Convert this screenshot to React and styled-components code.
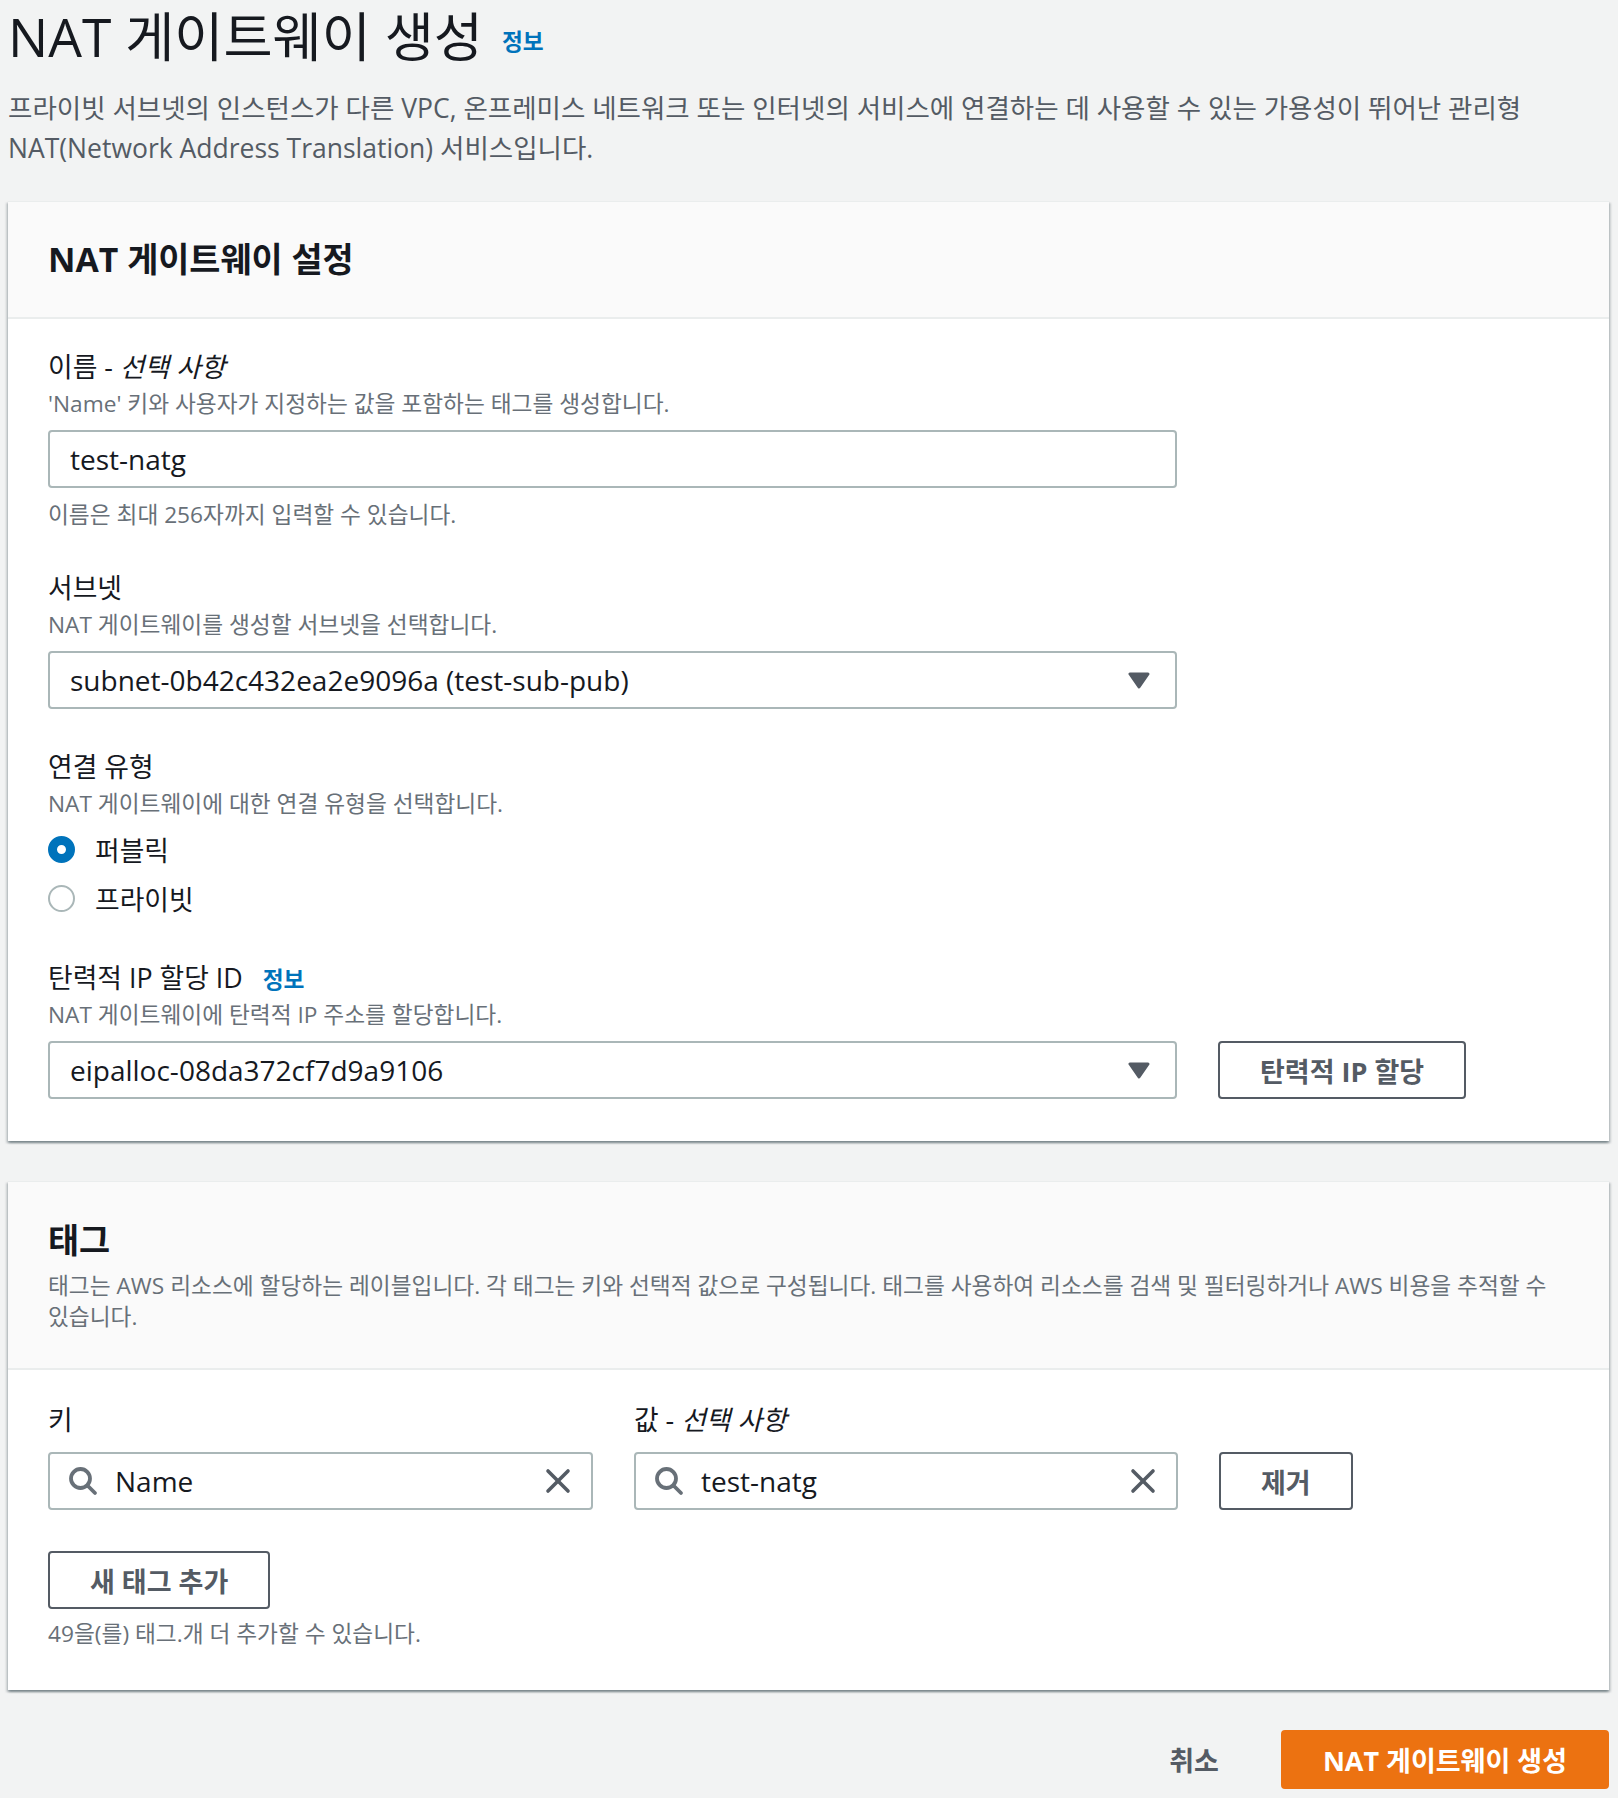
import React from 'react';
import styled, { createGlobalStyle } from 'styled-components';

const GlobalStyle = createGlobalStyle`
  html, body { margin: 0; padding: 0; background: #f2f3f3; }
  body {
    font-family: "Open Sans", "Noto Sans CJK KR", sans-serif;
    color: #16191f;
  }
  * { box-sizing: border-box; }
`;

const Page = styled.div`
  display: flex;
  flex-direction: column;
  padding: 0 9px 9px 8px;
`;

const TitleRow = styled.div`
  display: flex;
  align-items: center;
  gap: 19px;
`;

const H1 = styled.h1`
  margin: 0;
  font-size: 53.4px;
  line-height: 73px;
  font-weight: 400;
  color: #16191f;
`;

const InfoLink = styled.a`
  color: #0073bb;
  font-weight: 700;
  font-size: 22.7px;
  margin-top: ${p => p.$mt || '0'};
  text-decoration: none;
  cursor: pointer;
`;

const PageDesc = styled.p`
  margin: 15px 0 0;
  font-size: 26.5px;
  line-height: 40px;
  color: #545b64;
`;

const Card = styled.section`
  margin-top: ${p => p.$mt || '33px'};
  background: #fff;
  border-top: 1px solid #eaeded;
  box-shadow: 0 2px 2px 0 rgba(0, 28, 36, 0.3), 2px 2px 2px 0 rgba(0, 28, 36, 0.15),
    -2px 2px 2px 0 rgba(0, 28, 36, 0.15);
`;

const CardHeader = styled.header`
  background: #fafafa;
  border-bottom: 2px solid #eaeded;
  padding: ${p => p.$pad || '37px 40px 37px'};
`;

const CardTitle = styled.h2`
  margin: 0;
  font-size: 33.8px;
  line-height: 41px;
  font-weight: 700;
  color: #16191f;
`;

const CardDesc = styled.p`
  margin: 9px 0 0;
  font-size: 22.7px;
  line-height: 31px;
  color: #687078;
`;

const CardBody = styled.div`
  display: flex;
  flex-direction: column;
  gap: ${p => p.$gap || '38px'};
  padding: ${p => p.$pad || '28px 40px 42px'};
`;

const Field = styled.div`
  display: flex;
  flex-direction: column;
`;

const Label = styled.label`
  display: flex;
  align-items: baseline;
  gap: 20px;
  height: 40px;
  font-size: 26.8px;
  line-height: 40px;
  color: #16191f;
`;

const Optional = styled.i`
  font-style: italic;
`;

const Hint = styled.div`
  margin-top: ${p => p.$mt || '2px'};
  font-size: 22.7px;
  line-height: 30px;
  color: #687078;
`;

const ControlRow = styled.div`
  display: flex;
  align-items: center;
  gap: 41px;
  margin-top: 11px;
`;

const InputBox = styled.div`
  display: flex;
  align-items: center;
  gap: 17px;
  width: ${p => p.$w || '1129px'};
  height: 58px;
  padding: 0 ${p => p.$pr || '20px'} 0 ${p => p.$pl || '20px'};
  background: #fff;
  border: 2px solid #aab7b8;
  border-radius: 4px;
`;

const TextInput = styled.input`
  flex: 1;
  min-width: 0;
  border: none;
  outline: none;
  padding: 0;
  background: transparent;
  font-family: "Open Sans", "Noto Sans CJK KR", sans-serif;
  font-size: 28px;
  color: #16191f;
`;

const SelectText = styled.span`
  flex: 1;
  font-size: 28px;
  color: #16191f;
`;

const Button = styled.button`
  height: ${p => (p.$primary ? '59px' : '58px')};
  padding: 0 40px;
  border: 2px solid ${p => (p.$primary ? '#ec7211' : p.$link ? 'transparent' : '#545b64')};
  border-radius: 4px;
  background: ${p => (p.$primary ? '#ec7211' : 'transparent')};
  color: ${p => (p.$primary ? '#fff' : '#545b64')};
  font-family: "Open Sans", "Noto Sans CJK KR", sans-serif;
  font-size: 27px;
  font-weight: 700;
  cursor: pointer;
  white-space: nowrap;
`;

const RadioGroup = styled.div`
  display: flex;
  flex-direction: column;
  gap: 9px;
  margin: 10px 0 2px;
`;

const RadioRow = styled.label`
  display: flex;
  align-items: center;
  gap: 20px;
  height: 40px;
  font-size: 26.8px;
  color: #16191f;
`;

const RadioDot = styled.span`
  width: 27px;
  height: 27px;
  border-radius: 50%;
  flex: none;
  background: #fff;
  border: ${p => (p.$checked ? '9px solid #0073bb' : '2px solid #aab7b8')};
`;

const TagGrid = styled.div`
  display: grid;
  grid-template-columns: 545px 544px auto;
  column-gap: 41px;
  align-items: end;
  justify-content: start;
`;

const TagField = styled.div`
  display: flex;
  flex-direction: column;
  gap: 12px;
`;

const AddBlock = styled.div`
  display: flex;
  flex-direction: column;
  align-items: flex-start;
  gap: 10px;
`;

const Footer = styled.div`
  display: flex;
  justify-content: flex-end;
  align-items: center;
  gap: 20px;
  margin-top: 40px;
`;

const Caret = () => (
  <svg width="22" height="17" viewBox="0 0 22 17">
    <polygon points="2,2 20,2 11,15" fill="#545b64" stroke="#545b64" strokeWidth="3" strokeLinejoin="round" />
  </svg>
);

const SearchIcon = () => (
  <svg width="30" height="30" viewBox="0 0 30 30" fill="none" stroke="#687078" strokeWidth="3.8" strokeLinecap="round">
    <circle cx="12.5" cy="12.5" r="9.5" />
    <line x1="20" y1="20" x2="27" y2="27" />
  </svg>
);

const ClearIcon = () => (
  <svg width="26" height="26" viewBox="0 0 26 26" fill="none" stroke="#545b64" strokeWidth="3.6" strokeLinecap="round">
    <line x1="3" y1="3" x2="23" y2="23" />
    <line x1="23" y1="3" x2="3" y2="23" />
  </svg>
);

export default function App() {
  return (
    <>
      <GlobalStyle />
      <Page>
        <TitleRow>
          <H1>NAT 게이트웨이 생성</H1>
          <InfoLink $mt="8px">정보</InfoLink>
        </TitleRow>
        <PageDesc>
          프라이빗 서브넷의 인스턴스가 다른 VPC, 온프레미스 네트워크 또는 인터넷의 서비스에 연결하는 데 사용할 수 있는 가용성이 뛰어난 관리형
          NAT(Network Address Translation) 서비스입니다.
        </PageDesc>

        <Card>
          <CardHeader>
            <CardTitle>NAT 게이트웨이 설정</CardTitle>
          </CardHeader>
          <CardBody>
            <Field>
              <Label>
                <span>
                  이름 - <Optional>선택 사항</Optional>
                </span>
              </Label>
              <Hint>'Name' 키와 사용자가 지정하는 값을 포함하는 태그를 생성합니다.</Hint>
              <ControlRow>
                <InputBox>
                  <TextInput readOnly value="test-natg" />
                </InputBox>
              </ControlRow>
              <Hint $mt="12px">이름은 최대 256자까지 입력할 수 있습니다.</Hint>
            </Field>

            <Field>
              <Label>서브넷</Label>
              <Hint>NAT 게이트웨이를 생성할 서브넷을 선택합니다.</Hint>
              <ControlRow>
                <InputBox $pr="25px">
                  <SelectText>subnet-0b42c432ea2e9096a (test-sub-pub)</SelectText>
                  <Caret />
                </InputBox>
              </ControlRow>
            </Field>

            <Field>
              <Label>연결 유형</Label>
              <Hint>NAT 게이트웨이에 대한 연결 유형을 선택합니다.</Hint>
              <RadioGroup>
                <RadioRow>
                  <RadioDot $checked />
                  퍼블릭
                </RadioRow>
                <RadioRow>
                  <RadioDot />
                  프라이빗
                </RadioRow>
              </RadioGroup>
            </Field>

            <Field>
              <Label>
                <span>탄력적 IP 할당 ID</span>
                <InfoLink>정보</InfoLink>
              </Label>
              <Hint>NAT 게이트웨이에 탄력적 IP 주소를 할당합니다.</Hint>
              <ControlRow>
                <InputBox $pr="25px">
                  <SelectText>eipalloc-08da372cf7d9a9106</SelectText>
                  <Caret />
                </InputBox>
                <Button>탄력적 IP 할당</Button>
              </ControlRow>
            </Field>
          </CardBody>
        </Card>

        <Card $mt="40px">
          <CardHeader $pad="38px 40px 36px">
            <CardTitle>태그</CardTitle>
            <CardDesc>
              태그는 AWS 리소스에 할당하는 레이블입니다. 각 태그는 키와 선택적 값으로 구성됩니다. 태그를 사용하여 리소스를 검색 및 필터링하거나 AWS 비용을 추적할 수
              있습니다.
            </CardDesc>
          </CardHeader>
          <CardBody $pad="30px 40px 41px" $gap="41px">
            <TagGrid>
              <TagField>
                <Label>키</Label>
                <InputBox $w="545px" $pl="18px">
                  <SearchIcon />
                  <TextInput readOnly value="Name" />
                  <ClearIcon />
                </InputBox>
              </TagField>
              <TagField>
                <Label>
                  <span>
                    값 - <Optional>선택 사항</Optional>
                  </span>
                </Label>
                <InputBox $w="544px" $pl="18px">
                  <SearchIcon />
                  <TextInput readOnly value="test-natg" />
                  <ClearIcon />
                </InputBox>
              </TagField>
              <Button>제거</Button>
            </TagGrid>
            <AddBlock>
              <Button>새 태그 추가</Button>
              <Hint $mt="0">49을(를) 태그.개 더 추가할 수 있습니다.</Hint>
            </AddBlock>
          </CardBody>
        </Card>

        <Footer>
          <Button $link>취소</Button>
          <Button $primary>NAT 게이트웨이 생성</Button>
        </Footer>
      </Page>
    </>
  );
}
